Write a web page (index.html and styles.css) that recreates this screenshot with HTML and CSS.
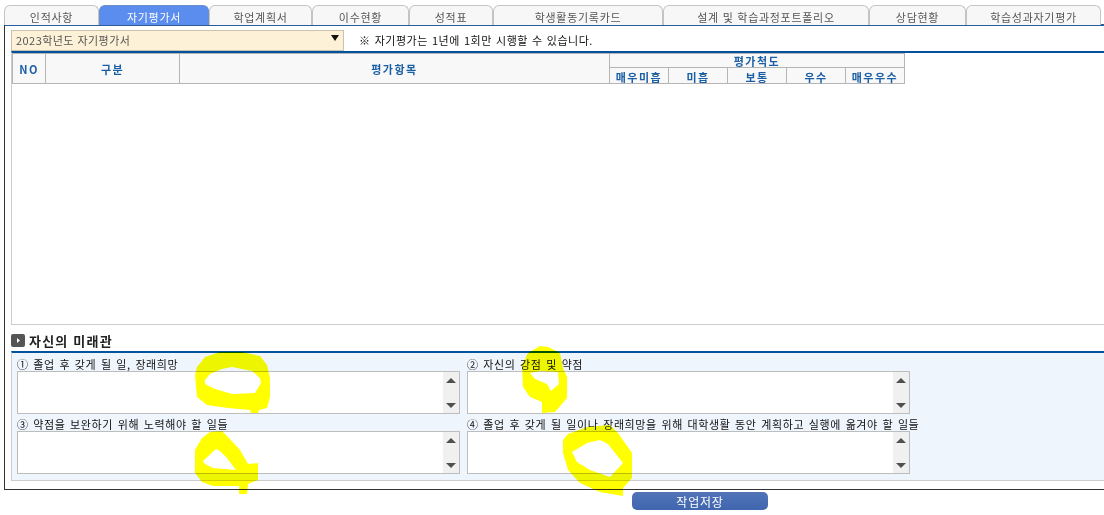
FILE: index.html
```html
<!DOCTYPE html>
<html lang="ko">
<head>
<meta charset="utf-8">
<title>자기평가서</title>
<link rel="stylesheet" href="styles.css">
</head>
<body>
<div class="page">
  <nav class="tabs">
    <a class="tab">인적사항</a>
    <a class="tab active">자기평가서</a>
    <a class="tab">학업계획서</a>
    <a class="tab">이수현황</a>
    <a class="tab">성적표</a>
    <a class="tab">학생활동기록카드</a>
    <a class="tab">설계 및 학습과정포트폴리오</a>
    <a class="tab">상담현황</a>
    <a class="tab">학습성과자기평가</a>
  </nav>
  <main class="frame">
    <div class="toolbar">
      <div class="select">
        <span>2023학년도 자기평가서</span>
        <svg class="caret" width="8" height="6" viewBox="0 0 8 6"><path d="M0 0h8L4 6z"/></svg>
      </div>
      <p class="notice">※ 자기평가는 1년에 1회만 시행할 수 있습니다.</p>
    </div>
    <section class="list">
      <table class="grid">
        <thead>
          <tr>
            <th rowspan="2" class="c-no">NO</th>
            <th rowspan="2" class="c-kind">구분</th>
            <th rowspan="2" class="c-item">평가항목</th>
            <th colspan="5" class="scale">평가척도</th>
          </tr>
          <tr class="sub">
            <th>매우미흡</th><th>미흡</th><th>보통</th><th>우수</th><th>매우우수</th>
          </tr>
        </thead>
      </table>
    </section>
    <h2 class="heading">
      <svg class="bullet" width="14" height="13" viewBox="0 0 14 13"><rect width="14" height="13" rx="2" fill="#555"/><path d="M6 4l3 2.5L6 9z" fill="#fff"/></svg>
      자신의 미래관
    </h2>
    <section class="panel">
      <div class="field">
        <label>① 졸업 후 갖게 될 일, 장래희망</label>
        <div class="area"><textarea></textarea><div class="scroll"><i class="up"></i><i class="down"></i></div></div>
      </div>
      <div class="field">
        <label>② 자신의 강점 및 약점</label>
        <div class="area"><textarea></textarea><div class="scroll"><i class="up"></i><i class="down"></i></div></div>
      </div>
      <div class="field">
        <label>③ 약점을 보완하기 위해 노력해야 할 일들</label>
        <div class="area"><textarea></textarea><div class="scroll"><i class="up"></i><i class="down"></i></div></div>
      </div>
      <div class="field">
        <label>④ 졸업 후 갖게 될 일이나 장래희망을 위해 대학생활 동안 계획하고 실행에 옮겨야 할 일들</label>
        <div class="area"><textarea></textarea><div class="scroll"><i class="up"></i><i class="down"></i></div></div>
      </div>
    </section>
  </main>
  <div class="actions"><button class="save" type="button">작업저장</button></div>
</div>
<svg class="marker" width="1104" height="515" viewBox="0 0 1104 515">
  <path fill="#ff0" fill-rule="evenodd" d="M205 357L220 352L242 352L260 356L267 365L270 378L270 397L267 408L259 410L258 413L251 413L250 410L228 408L207 405L197 397L195 375L197 367ZM205 380L205 384L215 389L232 394L255 393L261 383L260 378L252 371L232 367L222 369L210 374Z"/>
  <path fill="#ff0" fill-rule="evenodd" d="M202 438L210 432L222 431L228 437L240 450L248 464L258 463L258 480L248 484L247 494L239 494L239 486L213 486L202 482L195 473L195 450ZM216 449L203 461L205 464L213 468L236 470L227 458L220 451Z"/>
  <path fill="#ff0" fill-rule="evenodd" d="M528 353L540 346L548 347L560 353L563 368L567 377L567 398L555 412L542 413L542 402L530 397L523 387L522 365ZM530 373L535 379L547 384L551 391L559 384L558 372L540 371Z"/>
  <path fill="#ff0" fill-rule="evenodd" d="M563 440L568 434L587 427L610 425L618 433L632 453L632 478L623 488L623 496L600 492L580 483L568 470L563 453ZM572 452L577 462L590 470L610 477L623 463L608 444L600 440L587 443Z"/>
</svg>
</body>
</html>
```
FILE: styles.css
```css
* { box-sizing: border-box; }
html, body { margin: 0; padding: 0; background: #fff; overflow: hidden; }
body { width: 1104px; height: 515px; position: relative; font-family: "Noto Sans CJK KR", "Noto Sans", sans-serif; font-size: 11px; color: #111; }
.page { padding: 5px 0 0 4px; width: 1104px; }
.tabs { display: grid; grid-template-columns: 95px 110px 103px 97px 84px 170px 206px 97px 135px; height: 19px; width: 1097px; }
.tab { display: flex; align-items: center; justify-content: center; padding-top: 3px; background: #f7f7f7; border: 1px solid #c4c4c4; border-bottom: 0; border-radius: 6px 6px 0 0; color: #555; font-size: 11px; letter-spacing: .7px; }
.tab.active { background: #5b8dee; border-color: #6d8fc9; color: #fff; }
.frame { border-top: 2px solid #2a5d9e; border-left: 1px solid #333; border-bottom: 1px solid #333; height: 466px; padding: 3px 0 0 6px; width: 1100px; }
.toolbar { display: flex; align-items: center; height: 22px; }
.select { width: 333px; height: 21px; background: #fdf2d7; border: 1px solid #c9c2ac; display: flex; align-items: center; justify-content: space-between; padding: 0 4px; color: #555; letter-spacing: .45px; }
.caret { fill: #111; margin: 0 0 4px 0; }
.notice { margin: 0 0 0 15px; font-size: 11px; letter-spacing: .5px; word-spacing: .6px; color: #111; }
.list { border-top: 2px solid #00539c; border-left: 1px solid #ccc; border-bottom: 1px solid #ccc; height: 274px; }
.grid { border-collapse: collapse; table-layout: fixed; width: 893px; }
.grid th { border: 1px solid #b5b5b5; background: #f8f8f8; color: #1a5ea5; font-size: 11px; font-weight: 700; padding: 0; letter-spacing: 1.5px; line-height: 12px; }
.c-no { width: 33px; }
.c-kind { width: 134px; }
.c-item { width: 430px; }
.scale { height: 14px; }
.grid .sub th { height: 16px; width: 59px; padding-top: 2px; }
.heading { display: flex; align-items: center; gap: 4px; margin: 8px 0 4px; height: 14px; font-size: 13px; font-weight: 700; color: #222; letter-spacing: 1.2px; }
.bullet { flex: none; }
.panel { border-top: 2px solid #00539c; border-left: 1px solid #ccc; border-bottom: 1px solid #ccc; background: #eef5fd; height: 130px; padding: 6px 0 0 5px; display: grid; grid-template-columns: 443px 443px; column-gap: 7px; row-gap: 0; align-content: start; }
.field { display: flex; flex-direction: column; height: 60px; width: 443px; }
.field label { height: 12px; line-height: 11px; font-size: 11px; letter-spacing: .6px; word-spacing: 1px; white-space: nowrap; color: #111; }
.area { display: flex; height: 43px; background: #fff; border: 1px solid #bdbdbd; }
.area textarea { flex: 1; min-width: 0; border: 0; margin: 0; padding: 0; resize: none; outline: 0; background: #fff; }
.scroll { width: 16px; background: #f0f0f0; display: flex; flex-direction: column; justify-content: space-between; align-items: center; padding: 6px 0 5px; }
.scroll i { display: block; width: 0; height: 0; border-left: 5px solid transparent; border-right: 5px solid transparent; }
.scroll .up { border-bottom: 5px solid #505050; }
.scroll .down { border-top: 5px solid #505050; }
.actions { display: flex; padding: 2px 0 0 628px; }
.save { width: 136px; height: 18px; border: 0; border-radius: 5px; padding: 0; background: linear-gradient(#5273b8, #3f66ae); color: #fff; font: 400 12px "Noto Sans CJK KR", sans-serif; letter-spacing: .8px; }
.marker { position: absolute; left: 0; top: 0; mix-blend-mode: multiply; pointer-events: none; }
```
